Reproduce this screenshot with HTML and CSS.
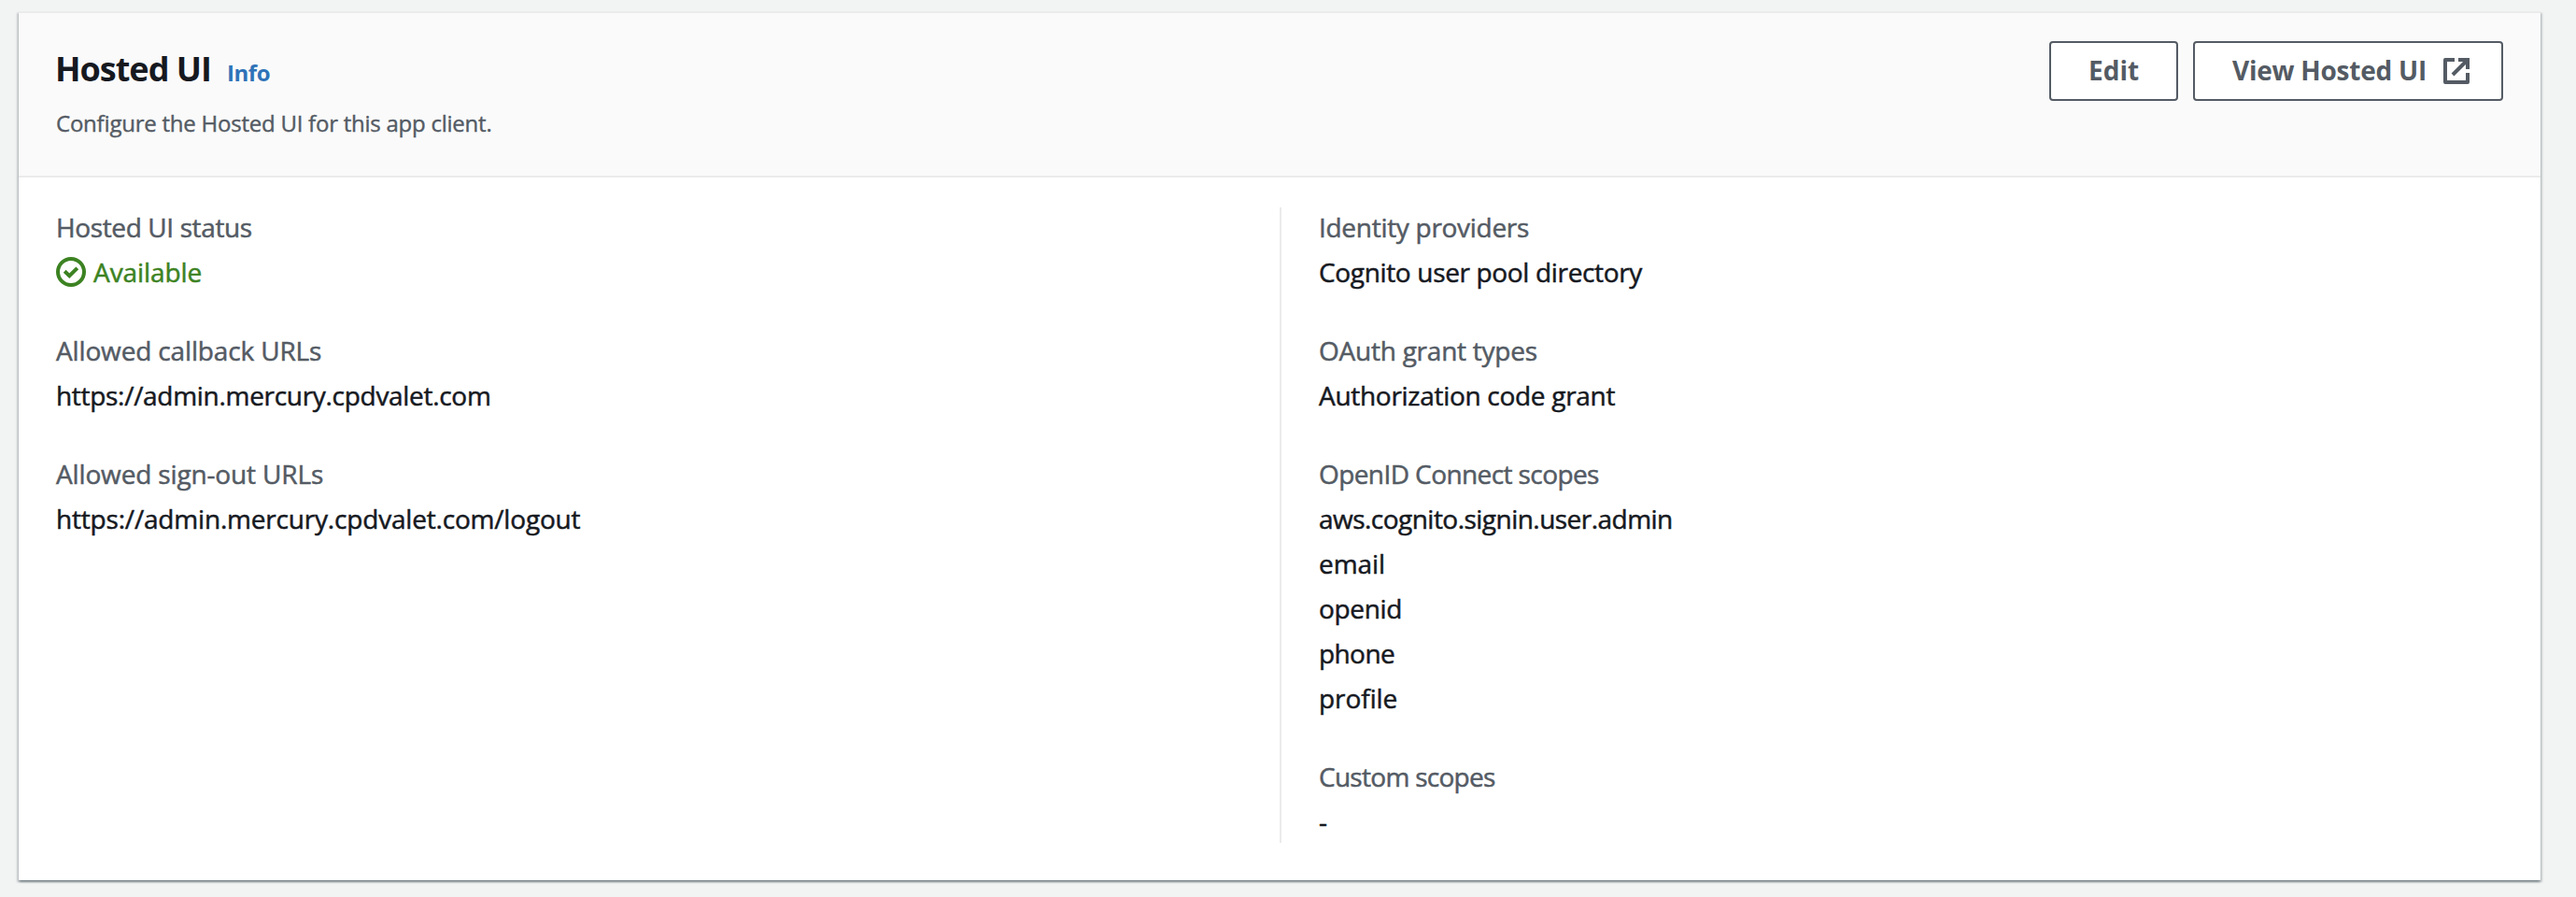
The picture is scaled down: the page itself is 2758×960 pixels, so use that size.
FILE: index.html
```
<!DOCTYPE html>
<html lang="en">
<head>
<meta charset="utf-8">
<title>Hosted UI</title>
<link rel="stylesheet" href="styles.css">
</head>
<body>
<section class="card">
  <header class="card-header">
    <div class="heading">
      <div class="title-row">
        <h2 class="title">Hosted UI</h2>
        <a class="info">Info</a>
      </div>
      <p class="description">Configure the Hosted UI for this app client.</p>
    </div>
    <div class="actions">
      <button class="button edit">Edit</button>
      <button class="button view"><span>View Hosted UI</span>
        <svg class="icon-external" viewBox="0 0 28 28"><path d="M12 2H2V26H26V16M16 2H26V12M26 2L10 18" fill="none" stroke="currentColor" stroke-width="4" stroke-linejoin="round"/><path d="M24 0H28V4H24Z" fill="currentColor"/></svg>
      </button>
    </div>
  </header>
  <div class="columns">
    <dl class="column">
      <div class="item">
        <dt class="label status-label">Hosted UI status</dt>
        <dd class="value status">
          <svg class="icon-status" viewBox="0 0 32 32"><circle cx="16" cy="16" r="14" fill="none" stroke="currentColor" stroke-width="4"/><path d="M9.2 15.2L14.3 20.2L22.8 11.8" fill="none" stroke="currentColor" stroke-width="4"/></svg>
          <span>Available</span>
        </dd>
      </div>
      <div class="item">
        <dt class="label loose">Allowed callback URLs</dt>
        <dd class="value url">https://admin.mercury.cpdvalet.com</dd>
      </div>
      <div class="item">
        <dt class="label loose">Allowed sign-out URLs</dt>
        <dd class="value url-long">https://admin.mercury.cpdvalet.com/logout</dd>
      </div>
    </dl>
    <dl class="column column-right">
      <div class="item">
        <dt class="label snug">Identity providers</dt>
        <dd class="value directory">Cognito user pool directory</dd>
      </div>
      <div class="item">
        <dt class="label oauth">OAuth grant types</dt>
        <dd class="value snug">Authorization code grant</dd>
      </div>
      <div class="item">
        <dt class="label tight">OpenID Connect scopes</dt>
        <dd class="value scope-admin">aws.cognito.signin.user.admin</dd>
        <dd class="value">email</dd>
        <dd class="value directory">openid</dd>
        <dd class="value tight">phone</dd>
        <dd class="value">profile</dd>
      </div>
      <div class="item">
        <dt class="label tighter">Custom scopes</dt>
        <dd class="value">-</dd>
      </div>
    </dl>
  </div>
</section>
</body>
</html>
```

FILE: styles.css
```
* { box-sizing: border-box; }

body {
  margin: 0;
  height: 960px;
  padding: 12px 38px 18px 20px;
  background: #f2f3f3;
  color: #16191f;
  font: 28px/42px "Open Sans", "Noto Sans", sans-serif;
  font-feature-settings: "liga" 1;
  overflow: hidden;
}

h2, p, dl, dt, dd { margin: 0; }

.card {
  height: 930px;
  background: #fff;
  border-top: 2px solid #ebebeb;
  box-shadow: 0 2px 2px rgba(0, 28, 36, .3), 2px 2px 2px rgba(0, 28, 36, .15), -2px 2px 2px rgba(0, 28, 36, .15);
}

.card-header {
  display: flex;
  justify-content: space-between;
  align-items: flex-start;
  height: 176px;
  padding: 30px 40px 0;
  background: #fafafa;
  border-bottom: 2px solid #ebebeb;
}

.title-row { display: flex; align-items: baseline; padding-top: 8px; }
.title { font-size: 36px; line-height: 44px; font-weight: 700; letter-spacing: -1px; margin-left: -1px; }
.info { margin-left: 17px; font-size: 24px; line-height: 36px; font-weight: 700; letter-spacing: -.4px; color: #2f73b8; }
.description { padding-top: 18px; font-size: 24px; line-height: 36px; letter-spacing: -.24px; color: #545b64; -webkit-text-stroke: .4px currentColor; }

.actions { display: flex; gap: 16px; }
.button {
  display: flex;
  align-items: center;
  height: 64px;
  padding: 0 0 2px 40px;
  border: 2px solid #545b64;
  border-radius: 4px;
  background: #fff;
  color: #545b64;
  font: 700 28px/58px "Open Sans", "Noto Sans", sans-serif;
}
.edit { width: 138px; }
.view { width: 332px; letter-spacing: -.24px; }
.icon-external { width: 28px; height: 28px; margin: 2px 34px 0 auto; }

.columns { display: grid; grid-template-columns: 1350px 1350px; padding-top: 32px; }
.column { display: flex; flex-direction: column; gap: 42px; height: 680px; padding-left: 40px; }
.column-right { border-left: 2px solid #ebebeb; }
.item { display: grid; gap: 6px; -webkit-text-stroke: .5px currentColor; }
.label { color: #545b64; }
.value { letter-spacing: -.08px; }

.status { display: flex; align-items: center; gap: 8px; color: #3c8222; }
.icon-status { width: 32px; height: 32px; }

.status-label { letter-spacing: -.38px; }
.loose { letter-spacing: -.15px; }
.snug { letter-spacing: -.29px; }
.oauth { letter-spacing: -.24px; }
.tight { letter-spacing: -.59px; }
.tighter { letter-spacing: -.72px; }
.url { letter-spacing: -.3px; }
.url-long { letter-spacing: -.19px; }
.directory { letter-spacing: -.34px; }
.scope-admin { letter-spacing: -.53px; }
```
